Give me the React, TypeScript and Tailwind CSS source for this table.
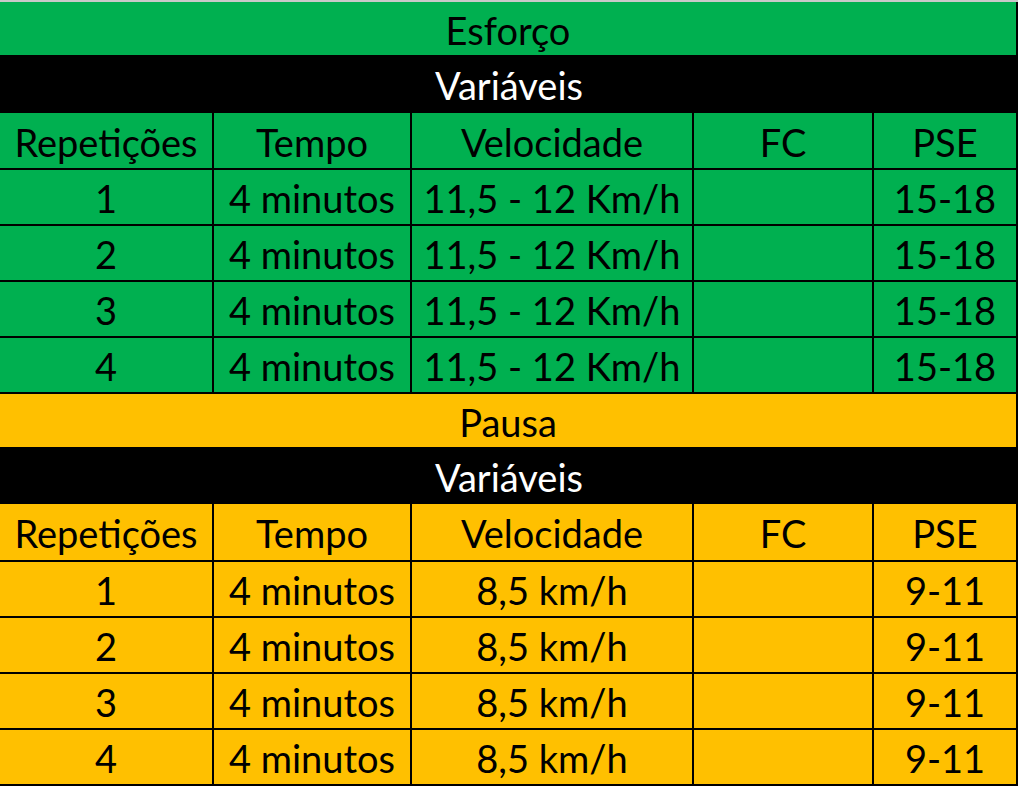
const cols = ["w-[214px]", "w-[198px]", "w-[282px]", "w-[180px]", "w-[144px]"];

const headers = ["Repetições", "Tempo", "Velocidade", "FC", "PSE"];

const esforco = [1, 2, 3, 4].map((n) => [String(n), "4 minutos", "11,5 - 12 Km/h", "", "15-18"]);
const pausa = [1, 2, 3, 4].map((n) => [String(n), "4 minutos", "8,5 km/h", "", "9-11"]);

function Row({ cells, h, bg }: { cells: string[]; h: string; bg: string }) {
  return (
    <div className={`flex ${h} ${bg} border-b-2 border-black`}>
      {cells.map((c, i) => (
        <div
          key={i}
          className={`${cols[i]} flex items-center justify-center border-r-2 border-black pt-[2px]`}
        >
          {c}
        </div>
      ))}
    </div>
  );
}

function Section({
  title,
  bg,
  rows,
  titleH,
  varH,
  headH,
}: {
  title: string;
  bg: string;
  rows: string[][];
  titleH: string;
  varH: string;
  headH: string;
}) {
  return (
    <div>
      <div className={`flex items-center justify-center ${titleH} ${bg} border-r-2 border-black pt-[2px]`}>
        {title}
      </div>
      <div className={`flex items-center justify-center ${varH} bg-black text-white pt-[2px]`}>
        Variáveis
      </div>
      <Row cells={headers} h={headH} bg={bg} />
      {rows.map((r, i) => (
        <Row key={i} cells={r} h="h-[56px]" bg={bg} />
      ))}
    </div>
  );
}

export default function App() {
  return (
    <div
      className="w-[1018px] h-[788px] bg-white text-black text-[38px] leading-none"
      style={{ fontFamily: "Lato, 'Open Sans', sans-serif" }}
    >
      <div className="h-[2px] bg-[#c9c9c9]" />
      <Section
        title="Esforço"
        bg="bg-[#00b050]"
        rows={esforco}
        titleH="h-[53px]"
        varH="h-[58px]"
        headH="h-[57px]"
      />
      <Section
        title="Pausa"
        bg="bg-[#ffc000]"
        rows={pausa}
        titleH="h-[53px]"
        varH="h-[57px]"
        headH="h-[58px]"
      />
    </div>
  );
}
